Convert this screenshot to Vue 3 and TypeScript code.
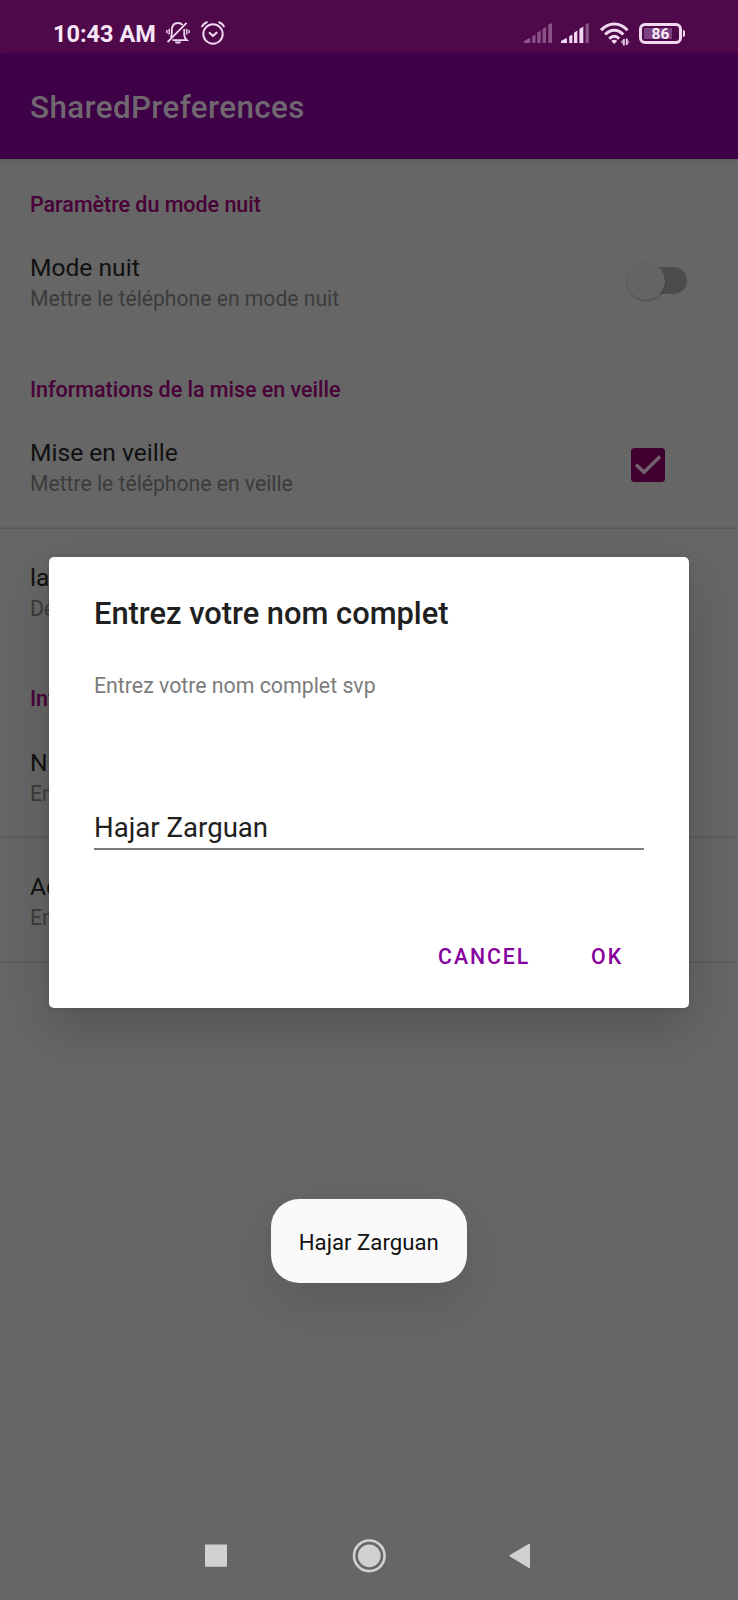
<script setup lang="ts">
interface Preference {
  title: string
  summary: string
  widget?: 'switch' | 'checkbox'
  divided?: boolean
}

interface Category {
  name: string
  items: Preference[]
}

const categories: Category[] = [
  {
    name: 'Paramètre du mode nuit',
    items: [{ title: 'Mode nuit', summary: 'Mettre le téléphone en mode nuit', widget: 'switch' }],
  },
  {
    name: 'Informations de la mise en veille',
    items: [
      { title: 'Mise en veille', summary: 'Mettre le téléphone en veille', widget: 'checkbox', divided: true },
      { title: 'la', summary: 'Dé' },
    ],
  },
  {
    name: 'Inf',
    items: [
      { title: 'N', summary: 'En', divided: true },
      { title: 'Ad', summary: 'En', divided: true },
    ],
  },
]

const fullName = 'Hajar Zarguan'
</script>

<template>
  <div class="screen">
    <header class="status">
      <span class="clock">10:43 AM</span>
      <svg class="bell" viewBox="0 0 24 24" fill="none" stroke="currentColor" stroke-width="1.8">
        <path d="M4.600 16.500C6.400 14.500 5.800 12.500 5.800 9.500C5.800 4.300 8.300 2 12 2C14 2 15.600 2.700 16.600 4M18.200 8V13C18.200 16 18.900 17.600 20.800 19.200H6.500" />
        <path d="M1.500 21.200L20.600 1.800" />
        <path d="M9.200 21H14.800L13.500 22H10.500Z" fill="currentColor" stroke-width="1" />
        <path d="M3.200 7.800V13.500M.900 9V12.300M20.800 7.800V13.500M23.100 9V12.300" stroke-width="1.400" />
      </svg>
      <svg class="alarm" viewBox="0 0 24 24" fill="none" stroke="currentColor" stroke-width="2" stroke-linecap="round" stroke-linejoin="round">
        <circle cx="12" cy="13" r="9.700" />
        <path d="M8.700 12L12 15L15.500 11.700" stroke-width="2.200" />
        <path d="M1.200 5.300C2.200 3.300 3.700 2 5.800 1.200M22.800 5.300C21.800 3.300 20.300 2 18.200 1.200" />
      </svg>
      <span class="gap"></span>
      <svg class="signal" viewBox="0 0 28 20" fill="currentColor" opacity=".36">
        <path d="M0 20V18L4.500 15.500H6.300V20ZM8.300 13.300L11.500 11.600V20H8.300ZM13.200 9.800L16.700 7.500V20H13.200ZM18.600 6L22 3.700V20H18.600ZM24.300 1.600L28 0V20H24.300Z" />
      </svg>
      <svg class="signal second" viewBox="0 0 28 20" fill="currentColor">
        <path d="M0 20V18L4.500 15.500H6V20ZM8.200 13.300L11.400 11.600V20H8.200ZM13 9.800L16.300 7.500V20H13ZM18.400 6L22.300 3.400V20H18.400Z" />
        <path d="M24.500 1L27.800 0V20H24.500Z" opacity=".36" />
      </svg>
      <svg class="wifi" viewBox="0 0 29 24" fill="none" stroke="currentColor" stroke-width="3">
        <path d="M1 8.200C8.500-.2 20-.2 27.500 8.200" />
        <path d="M5.200 12.600C10.400 6.900 18.100 6.900 23.300 12.600" />
        <path d="M9.300 16.700C12.300 13.400 16.200 13.400 19.200 16.700" />
        <path d="M14.250 22L11.300 19C13 17.300 15.500 17.300 17.200 19Z" fill="currentColor" stroke="none" />
        <path d="M24 17V23.500M26.700 16.500V23" stroke-width="1.600" />
        <path d="M21 20.500V19L24 17V23.500ZM26.300 16L29.300 20V21L26.300 23Z" fill="currentColor" stroke="none" opacity=".6" />
      </svg>
      <div class="battery"><span class="charge"></span><span class="level">86</span></div>
      <span class="terminal"></span>
    </header>

    <div class="appbar"><h1>SharedPreferences</h1></div>

    <main class="list">
      <section v-for="category in categories" :key="category.name">
        <h2>{{ category.name }}</h2>
        <div v-for="item in category.items" :key="item.title" class="item" :class="{ divided: item.divided }">
          <div class="texts">
            <p class="title">{{ item.title }}</p>
            <p class="summary">{{ item.summary }}</p>
          </div>
          <span v-if="item.widget === 'switch'" class="switch"><span class="thumb"></span></span>
          <svg v-else-if="item.widget === 'checkbox'" class="check" viewBox="0 0 34 34">
            <rect width="34" height="34" rx="3.500" fill="#40002f" />
            <path d="M5 16.500L13 24.300L29 8.500" fill="none" stroke="#75606f" stroke-width="3.400" />
          </svg>
        </div>
      </section>
    </main>

    <div class="dialog" role="dialog">
      <h3>Entrez votre nom complet</h3>
      <p class="message">Entrez votre nom complet svp</p>
      <div class="field">{{ fullName }}</div>
      <div class="actions">
        <button type="button">CANCEL</button>
        <button type="button">OK</button>
      </div>
    </div>

    <div class="toast">{{ fullName }}</div>

    <svg class="nav" viewBox="0 0 738 90" fill="#d1d1d1">
      <rect x="205" y="34.500" width="22" height="22.300" rx=".600" />
      <circle cx="369.300" cy="45.800" r="15.300" fill="none" stroke="#d1d1d1" stroke-width="2.600" />
      <circle cx="369.300" cy="45.800" r="11.400" />
      <path d="M509.500 45.300Q509 45.800 509.500 46.300L529 58Q530 58.200 530 57.500V34.200Q530 33.500 529 33.700Z" />
    </svg>
  </div>
</template>

<style>
body {
  margin: 0;
  background: #666;
}
</style>

<style scoped>
.screen {
  position: relative;
  width: 738px;
  height: 1600px;
  overflow: hidden;
  background: #666;
  font-family: Roboto, "Noto Sans", sans-serif;
}
h1, h2, h3, p {
  margin: 0;
}
.status {
  display: flex;
  box-sizing: border-box;
  height: 53px;
  padding: 0 0 0 53px;
  background: #4f084a;
  color: #f0d8f0;
}
.clock {
  width: 103px;
  margin-right: 10px;
  color: #f8e6f8;
  font-size: 23.500px;
  font-weight: 700;
  line-height: 69px;
  white-space: nowrap;
}
.bell {
  width: 24px;
  height: 24px;
  margin-top: 21px;
}
.alarm {
  width: 24px;
  height: 24px;
  margin: 21px 0 0 11px;
}
.gap {
  flex: 1;
}
.signal {
  width: 28px;
  height: 20px;
  margin-top: 23px;
}
.second {
  margin-left: 9px;
}
.wifi {
  width: 29px;
  height: 24px;
  margin: 22px 0 0 11px;
}
.battery {
  display: flex;
  align-items: center;
  justify-content: center;
  position: relative;
  box-sizing: border-box;
  width: 43px;
  height: 21px;
  margin: 23px 0 0 10px;
  border: 3px solid currentColor;
  border-radius: 6px;
}
.charge {
  position: absolute;
  left: 2px;
  top: 2px;
  width: 28px;
  height: 11px;
  background: #7c4280;
}
.level {
  position: relative;
  top: 1px;
  color: #fbeefb;
  font-size: 15.500px;
  font-weight: 700;
  line-height: 15px;
}
.terminal {
  width: 2px;
  height: 7px;
  margin: 30px 53px 0 1px;
  border-radius: 0 2px 2px 0;
  background: currentColor;
}
.appbar {
  box-sizing: border-box;
  position: relative;
  height: 105.500px;
  padding-left: 30px;
  background: #3e0046;
  box-shadow: 0 2px 6px rgba(0, 0, 0, 0.12);
}
h1 {
  color: #706770;
  font-size: 31.400px;
  font-weight: 500;
  letter-spacing: 0.380px;
  line-height: 110px;
}
h2 {
  height: 60.400px;
  padding-left: 30px;
  color: #480036;
  font-size: 21.450px;
  font-weight: 500;
  line-height: 92px;
}
.item {
  display: flex;
  box-sizing: border-box;
  height: 124.700px;
  padding: 34px 51px 0 30px;
}
.divided {
  box-shadow: inset 0 -1.500px #585858;
}
.texts {
  flex: 1;
}
.title {
  color: #111;
  font-size: 24.600px;
  line-height: 30px;
}
.summary {
  color: #3c3c3c;
  font-size: 21.150px;
  line-height: 31px;
}
.switch {
  position: relative;
  width: 45px;
  height: 27px;
  margin-top: 14px;
  border-radius: 14px;
  background: #4c4c4c;
}
.thumb {
  position: absolute;
  left: -15px;
  top: -5px;
  width: 38px;
  height: 38px;
  border-radius: 50%;
  background: #646464;
  box-shadow: 0 1px 2px rgba(0, 0, 0, 0.25);
}
.check {
  width: 34px;
  height: 34px;
  margin: 10px 22px 0 0;
}
.dialog {
  position: absolute;
  left: 49px;
  top: 556.500px;
  box-sizing: border-box;
  width: 640px;
  height: 451.500px;
  padding: 39.500px 45px 0;
  border-radius: 5px;
  background: #fff;
  box-shadow: 0 20px 50px rgba(0, 0, 0, 0.18), 0 0 4px rgba(0, 0, 0, 0.1);
}
h3 {
  color: #202020;
  font-size: 30.850px;
  font-weight: 500;
  line-height: 36px;
}
.message {
  margin-top: 41px;
  color: #7c7c7c;
  font-size: 21.300px;
  line-height: 26px;
}
.field {
  height: 40px;
  margin-top: 109px;
  border-bottom: 2px solid #7b7b7b;
  color: #202020;
  font-size: 27.600px;
  line-height: 39px;
}
.actions {
  display: flex;
  justify-content: flex-end;
  gap: 61px;
  margin: 92px 21px 0 0;
}
button {
  padding: 0;
  border: 0;
  background: none;
  color: #86009f;
  font: 500 21.300px/30px Roboto, sans-serif;
  letter-spacing: 1.900px;
}
.toast {
  position: absolute;
  left: 271px;
  top: 1199px;
  width: 195.500px;
  height: 84px;
  border-radius: 28px;
  background: #fafafa;
  box-shadow: 0 20px 50px rgba(0, 0, 0, 0.11);
  color: #111;
  font-size: 22.200px;
  line-height: 86px;
  text-align: center;
}
.nav {
  position: absolute;
  left: 0;
  bottom: 0;
  width: 738px;
  height: 90px;
}
</style>
